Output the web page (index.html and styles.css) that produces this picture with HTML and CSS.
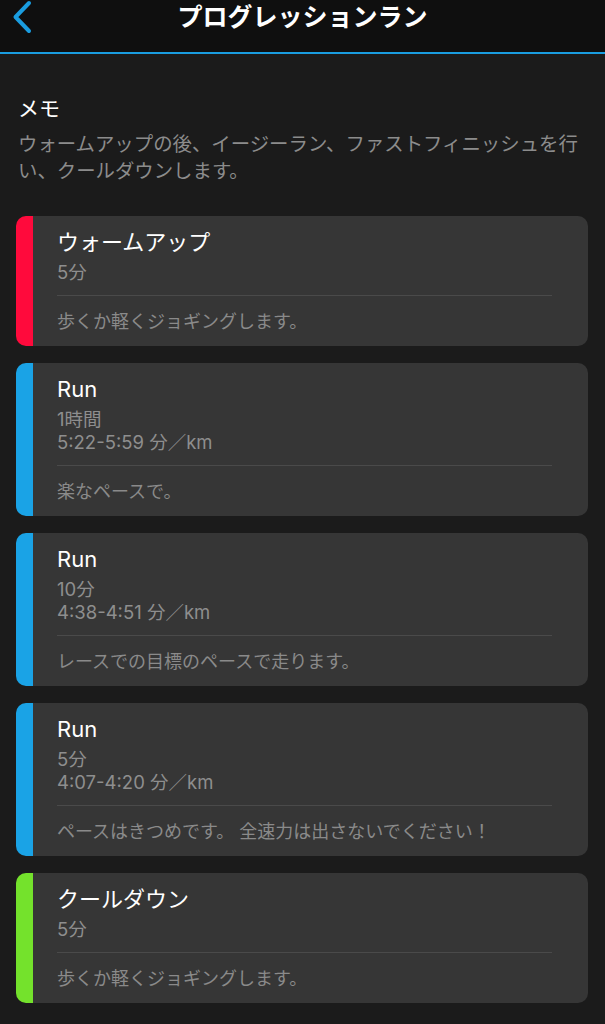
FILE: index.html
```html
<!DOCTYPE html>
<html lang="ja">
<head>
    <meta charset="UTF-8">
    <meta name="viewport" content="width=device-width, initial-scale=1.0">
    <title>プログレッションラン</title>
    <link rel="stylesheet" href="styles.css">
</head>
<body>

<header class="topbar">
    <a class="back" href="#">
        <svg width="24" height="34" viewBox="0 0 24 34">
            <path d="M19 3 L5.5 17 L19 31" fill="none" stroke="#1a9de0" stroke-width="4" stroke-linecap="round" stroke-linejoin="round"/>
        </svg>
    </a>
    <h1>プログレッションラン</h1>
</header>

<main class="content">
    <section class="memo">
        <h2>メモ</h2>
        <p>ウォームアップの後、イージーラン、ファストフィニッシュを行い、クールダウンします。</p>
    </section>

    <div class="step warmup">
        <div class="step-body">
            <div class="step-title">ウォームアップ</div>
            <div class="step-info">5分</div>
            <div class="step-note">歩くか軽くジョギングします。</div>
        </div>
    </div>

    <div class="step run">
        <div class="step-body">
            <div class="step-title">Run</div>
            <div class="step-info">1時間</div>
            <div class="step-info">5:22-5:59 分／km</div>
            <div class="step-note">楽なペースで。</div>
        </div>
    </div>

    <div class="step run">
        <div class="step-body">
            <div class="step-title">Run</div>
            <div class="step-info">10分</div>
            <div class="step-info">4:38-4:51 分／km</div>
            <div class="step-note">レースでの目標のペースで走ります。</div>
        </div>
    </div>

    <div class="step run">
        <div class="step-body">
            <div class="step-title">Run</div>
            <div class="step-info">5分</div>
            <div class="step-info">4:07-4:20 分／km</div>
            <div class="step-note">ペースはきつめです。 全速力は出さないでください！</div>
        </div>
    </div>

    <div class="step cooldown">
        <div class="step-body">
            <div class="step-title">クールダウン</div>
            <div class="step-info">5分</div>
            <div class="step-note">歩くか軽くジョギングします。</div>
        </div>
    </div>
</main>

</body>
</html>
```

FILE: styles.css
```css
body {
    margin: 0;
    font-family: Inter, "Noto Sans CJK JP", sans-serif;
    background-color: #1b1b1b;
    color: #fff;
}
.topbar {
    position: relative;
    height: 52px;
    background-color: #0f0f0f;
    border-bottom: 2px solid #1a9de0;
}
.topbar h1 {
    margin: 0;
    text-align: center;
    font-size: 25px;
    font-weight: 700;
    line-height: 34px;
}
.back {
    position: absolute;
    left: 10px;
    top: 0;
}
.content {
    padding: 41px 17px 20px 16px;
}
.memo {
    padding: 0 1px 0 2px;
    margin-bottom: 31px;
}
.memo h2 {
    margin: 0 0 8px;
    font-size: 21px;
    font-weight: 400;
    line-height: 28px;
}
.memo p {
    margin: 0;
    font-size: 19.4px;
    line-height: 27px;
    color: #8c8c8c;
}
.step {
    display: flex;
    background-color: #363636;
    border-radius: 10px;
    overflow: hidden;
    margin-bottom: 17px;
    border-left: 17px solid #1aa3e6;
}
.warmup {
    border-left-color: #ff0a3c;
}
.cooldown {
    border-left-color: #74e22c;
}
.step-body {
    flex: 1;
    padding: 8px 36px 11px 24px;
}
.step-title {
    font-size: 22px;
    line-height: 36px;
}
.step-info {
    font-size: 18.5px;
    line-height: 24px;
    color: #8e8e8e;
}
.step-info + .step-info {
    line-height: 23px;
}
.step-note {
    margin-top: 11px;
    padding-top: 13px;
    border-top: 1px solid #4a4a4a;
    font-size: 18px;
    line-height: 26px;
    color: #8a8a8a;
}
```
